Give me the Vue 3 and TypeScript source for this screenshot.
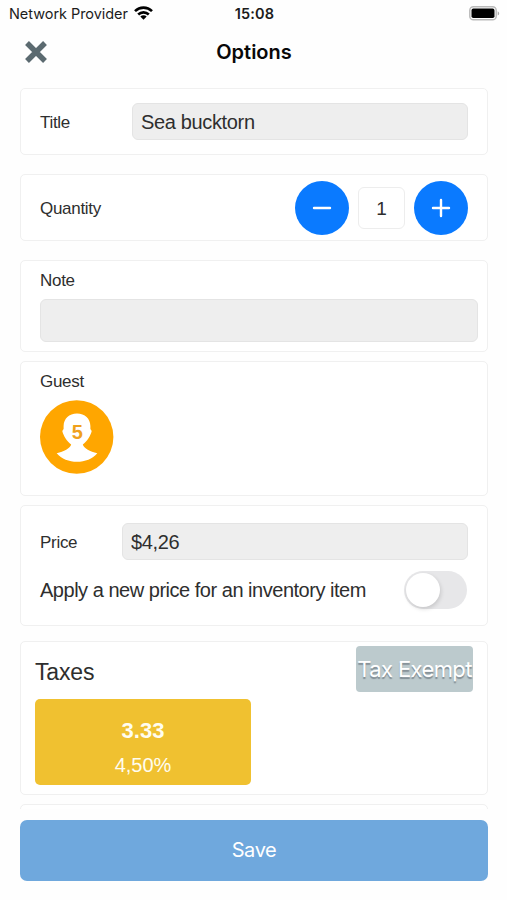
<script setup lang="ts">
import { ref } from 'vue'

interface Tax {
  name: string
  rate: string
}

const title = ref('Sea bucktorn')
const note = ref('')
const price = ref('$4,26')
const quantity = ref(1)
const guest = ref(5)
const applyPrice = ref(false)
const taxes: Tax[] = [{ name: '3.33', rate: '4,50%' }]

function step(delta: number) {
  quantity.value = Math.max(1, quantity.value + delta)
}
</script>

<template>
  <div class="screen">
    <div class="status">
      <div class="carrier">
        <span class="network">Network Provider</span>
        <svg class="wifi" width="19" height="14" viewBox="0 0 19 14">
          <g fill="none" stroke="#000" stroke-width="2.6">
            <path d="M1 5.100C5.800.4 13.200.4 18 5.100" />
            <path d="M4.200 8.500c3-2.900 7.600-2.900 10.600 0" />
          </g>
          <path d="M6.300 10.600c1.800-1.700 4.600-1.700 6.400 0L9.500 13.800z" />
        </svg>
      </div>
      <span class="clock">15:08</span>
      <div class="power">
        <svg width="31" height="15" viewBox="0 0 31 15">
          <rect x=".8" y=".8" width="26.400" height="13" rx="3.600" fill="#fff" stroke="#bababa" stroke-width="1.500" />
          <rect x="2.500" y="2.600" width="23" height="9.500" rx="1.800" />
          <path d="M28.700 5.200c2 .8 2 3.600 0 4.400z" fill="#aaa" />
        </svg>
      </div>
    </div>

    <header class="header">
      <button class="close" aria-label="Close">
        <svg width="24" height="24" viewBox="0 0 24 24">
          <path d="M3 3l18 18M21 3L3 21" stroke="#5b6a70" stroke-width="5.400" fill="none" />
        </svg>
      </button>
      <h1>Options</h1>
      <span></span>
    </header>

    <main class="content">
      <section class="card title-card">
        <label class="label">Title</label>
        <input v-model="title" class="field title-field" />
      </section>

      <section class="card quantity-card">
        <span class="label">Quantity</span>
        <div class="stepper">
          <button class="round" aria-label="Decrease" @click="step(-1)">
            <svg width="54" height="54" viewBox="0 0 54 54">
              <path d="M19 27h16" stroke="#fff" stroke-width="2.400" stroke-linecap="round" />
            </svg>
          </button>
          <span class="count">{{ quantity }}</span>
          <button class="round" aria-label="Increase" @click="step(1)">
            <svg width="54" height="54" viewBox="0 0 54 54">
              <path d="M19 27h16M27 19v16" stroke="#fff" stroke-width="2.400" stroke-linecap="round" />
            </svg>
          </button>
        </div>
      </section>

      <section class="card note-card">
        <label class="label">Note</label>
        <input v-model="note" class="field note-field" />
      </section>

      <section class="card guest-card">
        <span class="label">Guest</span>
        <svg class="guest" width="74" height="74" viewBox="0 0 74 74">
          <circle cx="36.700" cy="37" r="36.700" fill="#ffa600" />
          <path
            d="M37 13.500C29 13.500 23.800 18.500 23.600 26v3L22.300 31C23.500 36 27 41.500 31.200 44.500C30 48.500 24 51.500 16.700 53.200C21.500 58.800 29 61.800 37 61.800S52.500 58.800 57.300 53.200C50 51.500 44 48.500 42.800 44.500C47 41.500 50.500 36 51.700 31L50.400 29V26C50.200 18.500 45 13.500 37 13.500z"
            fill="#fff"
          />
          <text x="37.200" y="38.800" text-anchor="middle" class="guest-number">{{ guest }}</text>
        </svg>
      </section>

      <section class="card price-card">
        <div class="row">
          <label class="label">Price</label>
          <input v-model="price" class="field price-field" />
        </div>
        <div class="row apply-row">
          <span class="apply">Apply a new price for an inventory item</span>
          <button class="switch" role="switch" :aria-checked="applyPrice" @click="applyPrice = !applyPrice">
            <span class="knob" :class="{ on: applyPrice }"></span>
          </button>
        </div>
      </section>

      <section class="card tax-card">
        <div class="tax-head">
          <h2>Taxes</h2>
          <button class="exempt">Tax Exempt</button>
        </div>
        <div v-for="tax in taxes" :key="tax.name" class="tax">
          <strong>{{ tax.name }}</strong>
          <span>{{ tax.rate }}</span>
        </div>
      </section>

      <section class="card next-card"></section>
    </main>

    <footer class="footer">
      <button class="save">Save</button>
    </footer>
  </div>
</template>

<style>
body {
  background: #fff;
}
</style>

<style scoped>
* {
  box-sizing: border-box;
}
button {
  border: 0;
  padding: 0;
  background: none;
  display: block;
}
.screen {
  width: 507px;
  height: 900px;
  display: flex;
  flex-direction: column;
  overflow: hidden;
  background: #fefefe;
  color: #2e2e2e;
  font-family: 'Liberation Sans', Arial, sans-serif;
}
.status {
  height: 28px;
  flex: none;
  display: grid;
  grid-template-columns: 1fr auto 1fr;
  align-items: center;
  padding: 0 7px 1px 9px;
  color: #1c1c1c;
  font-family: Inter, sans-serif;
}
.carrier {
  display: flex;
  align-items: center;
  gap: 6px;
}
.network {
  font-size: 14.500px;
  letter-spacing: -0.05px;
  white-space: nowrap;
}
.wifi {
  margin-top: -2px;
}
.clock {
  font-size: 14.500px;
  font-weight: 600;
  letter-spacing: 0.2px;
}
.power {
  display: flex;
  justify-content: flex-end;
  margin-top: -1px;
}
.header {
  height: 60px;
  flex: none;
  display: grid;
  grid-template-columns: 1fr auto 1fr;
  align-items: center;
  padding: 0 23px 12px 24px;
}
.close {
  width: 24px;
  height: 24px;
  margin-top: -1px;
}
.close svg {
  display: block;
}
h1 {
  margin: 0;
  font: 600 20px/24px Inter, sans-serif;
  color: #080808;
}
.content {
  height: 721px;
  flex: none;
  overflow: hidden;
  padding: 0 19px 0 20px;
}
.card {
  border: 1.500px solid #f0f0f0;
  border-radius: 5px;
  background: #fff;
}
.label {
  font-size: 17px;
  line-height: 20px;
  letter-spacing: -0.3px;
}
.field {
  display: block;
  border: 1px solid #e4e4e4;
  border-radius: 6px;
  background: #eee;
  padding: 2px 8px 0;
  outline: none;
  color: #2e2e2e;
  font: 20px 'Liberation Sans', Arial, sans-serif;
  letter-spacing: -0.35px;
}
.title-card {
  height: 67px;
  display: flex;
  align-items: center;
  justify-content: space-between;
  padding: 0 19px;
}
.title-card .label,
.quantity-card .label,
.price-card .label {
  padding-top: 2px;
}
.title-field {
  width: 336px;
  height: 37px;
}
.quantity-card {
  height: 67px;
  margin-top: 19px;
  display: flex;
  align-items: center;
  justify-content: space-between;
  padding: 0 19px;
}
.stepper {
  display: flex;
  align-items: center;
  gap: 9px;
}
.round {
  width: 54px;
  height: 54px;
  border-radius: 50%;
  background: #0a7aff;
}
.round svg {
  display: block;
}
.count {
  width: 47px;
  height: 42px;
  border: 1px solid #ededed;
  border-radius: 6px;
  text-align: center;
  font-size: 19px;
  line-height: 42px;
}
.note-card {
  height: 92px;
  margin-top: 19px;
  padding: 10px 9px 0 19px;
}
.note-card .label,
.guest-card .label {
  display: block;
}
.note-field {
  width: 438px;
  height: 43px;
  margin-top: 8px;
}
.guest-card {
  height: 135px;
  margin-top: 9px;
  padding: 10px 19px 0;
}
.guest {
  display: block;
  margin-top: 8px;
}
.guest-number {
  font: 700 20px 'Liberation Sans', Arial, sans-serif;
  fill: #efa11c;
}
.price-card {
  height: 121px;
  margin-top: 9px;
  padding: 17px 19px 0;
}
.row {
  display: flex;
  align-items: center;
  justify-content: space-between;
}
.price-field {
  width: 346px;
  height: 37px;
}
.apply-row {
  margin-top: 11px;
}
.apply {
  font-size: 20px;
  line-height: 24px;
  letter-spacing: -0.48px;
  white-space: nowrap;
}
.switch {
  width: 63px;
  height: 38px;
  padding: 2px;
  margin-right: 1px;
  border-radius: 19px;
  background: #e7e7e9;
}
.knob {
  display: block;
  width: 34px;
  height: 34px;
  border-radius: 50%;
  background: #fff;
  box-shadow: 1px 2px 4px rgba(0, 0, 0, 0.14);
}
.knob.on {
  margin-left: 25px;
}
.tax-card {
  height: 154px;
  margin-top: 15px;
  padding: 4px 14px 0;
}
.tax-head {
  display: flex;
  align-items: center;
  justify-content: space-between;
}
h2 {
  margin: 6px 0 0;
  font-size: 23px;
  line-height: 28px;
  font-weight: 400;
  letter-spacing: -0.15px;
}
.exempt {
  width: 117px;
  height: 46px;
  border-radius: 4px;
  background: #bccacd;
  color: #fff;
  font: 22px Inter, sans-serif;
  letter-spacing: -0.6px;
  white-space: nowrap;
  text-shadow: 0 2px 1px rgba(90, 100, 110, 0.6);
}
.tax {
  width: 216px;
  height: 86px;
  margin-top: 7px;
  padding-top: 18px;
  border-radius: 5px;
  background: #f0c130;
  color: #fffdf0;
  display: flex;
  flex-direction: column;
  align-items: center;
}
.tax strong {
  font-size: 22px;
  line-height: 28px;
}
.tax span {
  font-size: 20px;
  line-height: 24px;
  margin-top: 8px;
}
.next-card {
  height: 60px;
  margin-top: 9px;
}
.footer {
  padding: 11px 19px 0 20px;
}
.save {
  width: 468px;
  height: 61px;
  padding-bottom: 1px;
  border-radius: 7px;
  background: #6fa8dd;
  color: #fff;
  font: 20px Inter, sans-serif;
  letter-spacing: -0.4px;
}
</style>
